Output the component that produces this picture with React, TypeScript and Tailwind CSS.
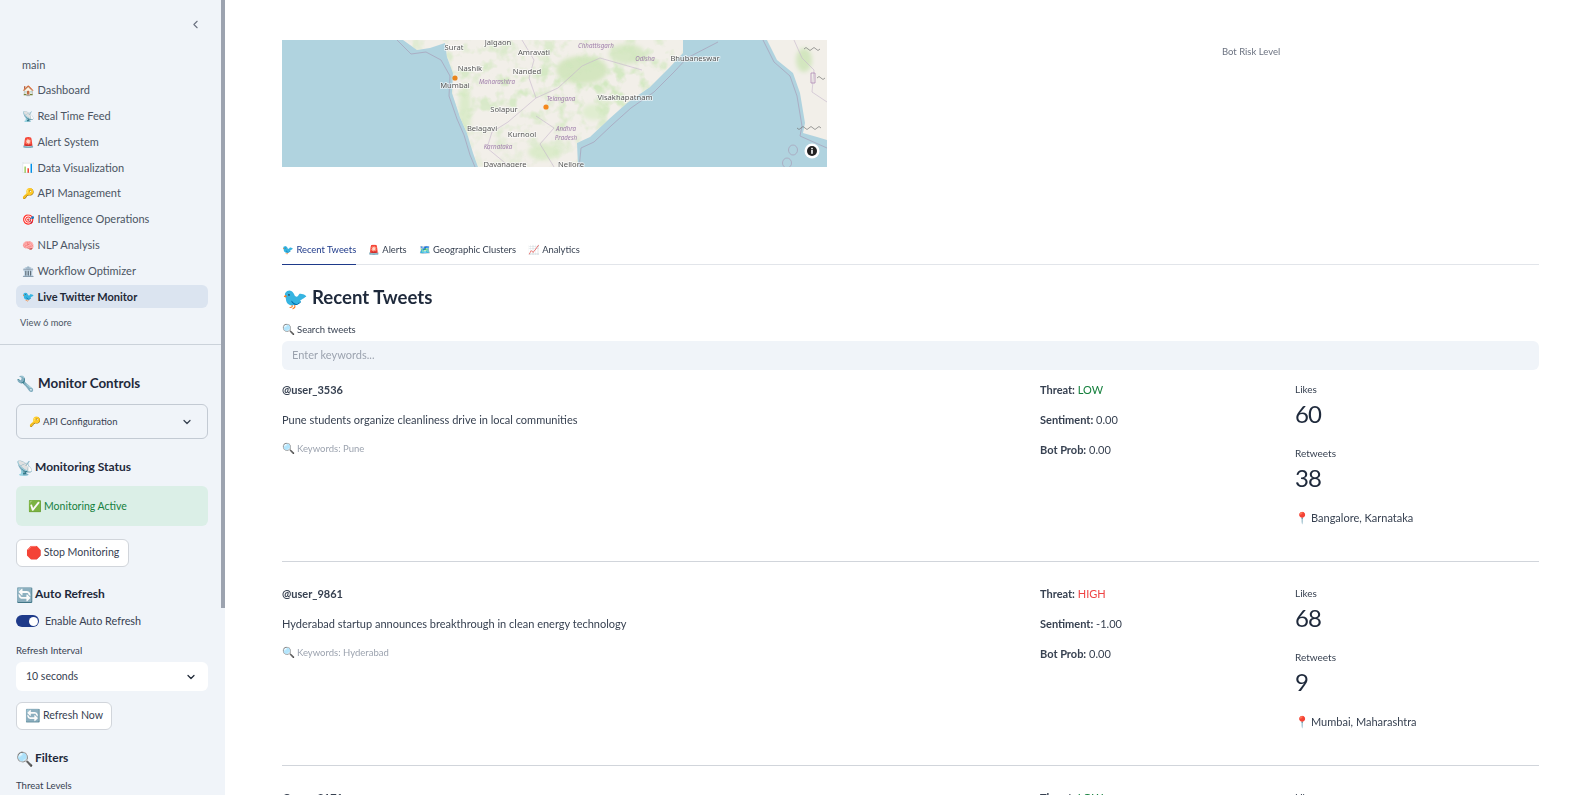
import React from "react";
import { ChevronLeft, ChevronDown } from "lucide-react";

const font = "font-['Lato','Noto_Sans',sans-serif]";

const nav = [
  ["🏠", "Dashboard"],
  ["📡", "Real Time Feed"],
  ["🚨", "Alert System"],
  ["📊", "Data Visualization"],
  ["🔑", "API Management"],
  ["🎯", "Intelligence Operations"],
  ["🧠", "NLP Analysis"],
  ["🏛️", "Workflow Optimizer"],
];

const labels: [number, number, string][] = [
  [172, 7, "Surat"],
  [216, 2, "Jalgaon"],
  [252, 12, "Amravati"],
  [188, 28, "Nashik"],
  [245, 31, "Nanded"],
  [173, 45, "Mumbai"],
  [222, 69, "Solapur"],
  [200, 88, "Belagavi"],
  [240, 94, "Kurnool"],
  [223, 124, "Davanagere"],
  [289, 124, "Nellore"],
  [343, 57, "Visakhapatnam"],
  [413, 18, "Bhubaneswar"],
];
const regions: [number, number, string][] = [
  [215, 42, "Maharashtra"],
  [279, 59, "Telangana"],
  [216, 107, "Karnataka"],
  [284, 89, "Andhra"],
  [284, 98, "Pradesh"],
  [363, 19, "Odisha"],
  [314, 6, "Chhattisgarh"],
];

const greens: [number, number, number, number, string][] = [
  [183, 70, 6, 28, "#dcebcb"],
  [300, 30, 26, 14, "#d4e6c0"],
  [345, 14, 18, 10, "#d8e8c6"],
  [262, 112, 16, 8, "#dcebcb"],
  [312, 72, 12, 8, "#e0edd0"],
];

function MapPic() {
  const land =
    "M121 0L135 10L148 8L163 3L165 17L171 33L170 53L178 77L185 93L191 113L196 127L296 127L295 103L308 97L326 80L345 63L368 47L388 27L401 13L401 0Z";
  return (
    <svg viewBox="0 0 545 127" className="block w-full h-full" preserveAspectRatio="none">
      <defs>
        <filter id="b" x="-30%" y="-30%" width="160%" height="160%">
          <feGaussianBlur stdDeviation="2" />
        </filter>
        <filter id="s" x="0" y="0" width="100%" height="100%">
          <feGaussianBlur stdDeviation="0.3" />
        </filter>
        <filter id="n" x="0" y="0" width="100%" height="100%">
          <feTurbulence type="fractalNoise" baseFrequency="0.07" numOctaves="3" seed="4" />
          <feColorMatrix values="0 0 0 0 0.62  0 0 0 0 0.8  0 0 0 0 0.5  4 0 0 0 -1.9" />
        </filter>
        <clipPath id="land">
          <path d={land} />
        </clipPath>
        <radialGradient id="g" cx="0.55" cy="0.35" r="0.6">
          <stop offset="0" stopColor="#fff" stopOpacity="0.95" />
          <stop offset="1" stopColor="#fff" stopOpacity="0.3" />
        </radialGradient>
        <mask id="m">
          <rect width="545" height="127" fill="url(#g)" />
        </mask>
      </defs>
      <rect width="545" height="127" fill="#b0d3df" />
      <path d={land} fill="#f2efe9" />
      <path d="M485 0L495 20L511 33L518 53L523 83L521 93L535 97L545 100L545 0Z" fill="#f2efe9" />
      <g clipPath="url(#land)">
        <g filter="url(#b)">
          {greens.map(([cx, cy, rx, ry, c], i) => (
            <ellipse key={i} cx={cx} cy={cy} rx={rx} ry={ry} fill={c} />
          ))}
        </g>
        <g mask="url(#m)">
          <rect x="120" width="285" height="127" filter="url(#n)" />
        </g>
      </g>
      <ellipse cx="522" cy="20" rx="8" ry="12" fill="#d3e6bf" filter="url(#b)" />
      <g fill="none" stroke="#a8a5bd" strokeWidth="0.8" filter="url(#s)">
        <path d="M121 0L135 14L150 12L165 20L174 36L173 56L181 79L188 95L194 115L199 127" transform="translate(-6 0)" />
        <path d="M296 127L298 106L311 100L329 83L348 66L371 50L391 30L404 16L435 0" transform="translate(1 2)" />
        <path d="M481 0L492 22L508 36L515 56L520 86L518 96L545 108" />
        <ellipse cx="511" cy="110" rx="4.5" ry="5" />
        <ellipse cx="505" cy="123" rx="4.5" ry="5" />
      </g>
      <g fill="none" stroke="#c6b6cc" strokeWidth="0.6">
        <path d="M240 0L252 20L247 38L254 58L226 82L210 92L205 108L228 127" />
        <path d="M254 58L276 48L300 26L318 18L360 30" />
        <path d="M254 76L272 88L258 104L272 127" />
        <path d="M512 0L520 18L532 30L530 52L545 62" />
      </g>
      <g className="font-['Noto_Sans',sans-serif]" textAnchor="middle" fontSize="7.6" fill="#555555" stroke="#ffffff" strokeOpacity="0.7" strokeWidth="1.6" paintOrder="stroke" filter="url(#s)">
        {labels.map(([x, y, t]) => (
          <text key={t} x={x} y={y + 3}>{t}</text>
        ))}
      </g>
      <g className="font-['Noto_Sans',sans-serif]" textAnchor="middle" fontSize="6.2" fontStyle="italic" fill="#a07fac" filter="url(#s)">
        {regions.map(([x, y, t]) => (
          <text key={t} x={x} y={y + 2}>{t}</text>
        ))}
      </g>
      <g fill="none" stroke="#777" strokeWidth="0.7" filter="url(#s)">
        <path d="M522 9q2-3 4 0t4 0t4 0t4 0" />
        <path d="M529 33h4v10h-4z" stroke="#a67cb0" />
        <path d="M535 38q2-3 4 0t4 0" />
        <path d="M515 88q2 3 4 0t4 0t4 0t4 0t4 0t4 0" />
      </g>
      <circle cx="173" cy="38" r="2.6" fill="#e8851c" />
      <circle cx="264" cy="67" r="2.6" fill="#f4881c" />
      <circle cx="530" cy="111" r="7.5" fill="#fff" />
      <circle cx="530" cy="111" r="5" fill="#222" />
      <rect x="529.2" y="110" width="1.6" height="3.8" fill="#fff" />
      <rect x="529.2" y="107.8" width="1.6" height="1.5" fill="#fff" />
    </svg>
  );
}

function Tweet({ user, text, kw, threat, tc, sent, bot, likes, rts, loc }: any) {
  return (
    <div className="mb-[20px] grid grid-cols-[758px_255px_1fr] h-[184px] border-b border-[#d1d5db] text-[11px] text-[#374151]">
      <div className="pt-[4px]">
        <div className="h-[30px] font-bold leading-[16px]">{user}</div>
        <div className="h-[30px] leading-[16px]">{text}</div>
        {kw && (
          <div className="flex text-[9.5px] leading-[13px] text-[#9ca3af]">
            <span className="w-[15px] text-[10.5px]">🔍</span>
            <span>Keywords: {kw}</span>
          </div>
        )}
      </div>
      <div className="pt-[4px] leading-[16px]">
        <div className="h-[30px]"><b>Threat:</b> <span style={{ color: tc }}>{threat}</span></div>
        <div className="h-[30px]"><b>Sentiment:</b> {sent}</div>
        <div><b>Bot Prob:</b> {bot}</div>
      </div>
      <div className="pt-[4px]">
        <div className="text-[10px] leading-[14px] h-[14px]">Likes</div>
        <div className="h-[50px] text-[24px] tracking-[-1px] leading-[36px] text-[#1e293b]">{likes}</div>
        <div className="text-[10px] leading-[14px] h-[14px]">Retweets</div>
        <div className="h-[50px] text-[24px] tracking-[-1px] leading-[36px] text-[#1e293b]">{rts}</div>
        {loc && (
          <div className="flex leading-[16px]">
            <span className="w-[16px] text-[11.5px]">📍</span>
            <span>{loc}</span>
          </div>
        )}
      </div>
    </div>
  );
}

function Btn({ children, w }: any) {
  return (
    <div className={`h-[28px] ${w} flex items-center justify-center gap-[2px] bg-white border border-[#d1d5db] rounded-[6px] text-[10.6px] text-[#374151]`}>
      {children}
    </div>
  );
}

function Head({ e, size, children, cls, mr }: any) {
  return (
    <div className={`h-[20px] flex items-center font-bold text-[#1e293b] ${cls}`}>
      <span className={`${size} ${mr}`}>{e}</span>
      <span>{children}</span>
    </div>
  );
}

export default function App() {
  return (
    <div className={`${font} h-screen flex overflow-hidden bg-white`}>
      <aside className="relative w-[225px] shrink-0 h-full overflow-hidden bg-[#f0f4f9]">
        <div className="absolute right-0 top-0 w-[4px] h-[608px] bg-[#9ca3af]" />
        <div className="h-[54px] flex items-start justify-end pr-[23px] pt-[18px]">
          <ChevronLeft size={13} className="text-[#6b7280]" />
        </div>
        <div className="pl-[16px] pr-[17px]">
          <div className="h-[22px] pl-[6px] flex items-center text-[11px] text-[#4b5563]">main</div>
          <div className="mt-[3px] flex flex-col gap-[2.8px]">
            {nav.map(([e, t]) => (
              <div key={t} className="h-[23px] pl-[6px] flex items-center text-[11px] text-[#4b5563] whitespace-pre">
                <span className="w-[15.5px] text-[10px]">{e}</span><span>{t}</span>
              </div>
            ))}
            <div className="h-[23px] pl-[6px] flex items-center text-[11px] font-bold text-[#1f2937] rounded-[6px] bg-[#dbe4f0]">
              <span className="w-[15.5px] text-[10px]">🐦</span><span>Live Twitter Monitor</span>
            </div>
          </div>
          <div className="mt-[5px] h-[20px] pl-[4px] flex items-center text-[9.3px] text-[#4b5563]">View 6 more</div>
        </div>
        <div className="mt-[11px] h-px bg-[#cbd2da]" />
        <div className="pl-[16px] pr-[17px]">
          <div className="mt-[28px]"><Head e="🔧" size="text-[15px]" mr="mr-[3px]" cls="text-[13.4px]">Monitor Controls</Head></div>
          <div className="mt-[11px] h-[35px] px-[12px] flex items-center justify-between border border-[#c3cad3] rounded-[6px] text-[9.5px] text-[#374151]">
            <span>🔑 API Configuration</span>
            <ChevronDown size={12} strokeWidth={2.5} className="text-[#374151] mr-[2px]" />
          </div>
          <div className="mt-[18px]"><Head e="📡" size="text-[14px]" mr="mr-[2px]" cls="text-[12px]">Monitoring Status</Head></div>
          <div className="mt-[9px] h-[40px] px-[12px] flex items-center rounded-[6px] bg-[#dbefe7] text-[10.5px] text-[#15803d]">
            <span className="w-[16px] text-[11px]">✅</span>Monitoring Active
          </div>
          <div className="mt-[13px]"><Btn w="w-[113px]"><span className="text-[12.5px]">🛑</span>Stop Monitoring</Btn></div>
          <div className="mt-[17px]"><Head e="🔄" size="text-[14px]" mr="mr-[2px]" cls="text-[12px]">Auto Refresh</Head></div>
          <div className="mt-[9px] h-[16px] flex items-center gap-[6px] text-[10.8px] text-[#374151]">
            <div className="w-[23px] h-[12px] rounded-full bg-[#1e3a8a] flex items-center justify-end pr-[1px]">
              <div className="w-[9px] h-[9px] rounded-full bg-white" />
            </div>
            <span>Enable Auto Refresh</span>
          </div>
          <div className="mt-[15px] h-[14px] flex items-center text-[9.6px] text-[#374151]">Refresh Interval</div>
          <div className="mt-[4px] h-[29px] pl-[10px] pr-[11px] flex items-center justify-between rounded-[6px] bg-white text-[10.5px] text-[#374151]">
            <span>10 seconds</span>
            <ChevronDown size={12} strokeWidth={2.5} className="text-[#1f2937]" />
          </div>
          <div className="mt-[11px]"><Btn w="w-[96px]"><span className="text-[12.5px]">🔄</span>Refresh Now</Btn></div>
          <div className="mt-[18px]"><Head e="🔍" size="text-[14px]" mr="mr-[2px]" cls="text-[12px]">Filters</Head></div>
          <div className="mt-[11px] h-[14px] flex items-center text-[9.6px] text-[#374151]">Threat Levels</div>
        </div>
      </aside>

      <main className="flex-1 min-w-0 h-full overflow-hidden pl-[57px] pr-[52px] pt-[40px]">
        <div className="flex h-[127px]">
          <div className="w-[545px] h-[127px] shrink-0"><MapPic /></div>
          <div className="flex-1 pl-[395px] pt-[5px]">
            <span className="block text-[9.5px] leading-[14px] text-[#6b7280]">Bot Risk Level</span>
          </div>
        </div>
        <div className="mt-[71px] h-[27px] flex gap-[12px] border-b border-[#e2e5ea] text-[9.4px] text-[#374151]">
          <div className="h-[27px] pt-[5px] border-b border-[#1e3a8a] text-[#1e3a8a]">🐦 Recent Tweets</div>
          <div className="pt-[5px]">🚨 Alerts</div>
          <div className="pt-[5px]">🗺️ Geographic Clusters</div>
          <div className="pt-[5px]">📈 Analytics</div>
        </div>
        <div className="mt-[20px] h-[26px] flex items-center font-bold text-[18.6px] text-[#1e293b]">
          <span className="text-[21px] mr-[4px]">🐦</span>Recent Tweets
        </div>
        <div className="mt-[12px] h-[14px] flex items-center text-[9.5px] text-[#374151]">
          <span className="w-[15px] text-[10.5px]">🔍</span>Search tweets
        </div>
        <div className="mt-[4px] h-[29px] px-[10px] flex items-center rounded-[6px] bg-[#f0f4f9] text-[11px] text-[#9ca3af]">Enter keywords...</div>
        <div className="mt-[8px]">
          <Tweet user="@user_3536" text="Pune students organize cleanliness drive in local communities" kw="Pune" threat="LOW" tc="#15803d" sent="0.00" bot="0.00" likes="60" rts="38" loc="Bangalore, Karnataka" />
          <Tweet user="@user_9861" text="Hyderabad startup announces breakthrough in clean energy technology" kw="Hyderabad" threat="HIGH" tc="#ef4444" sent="-1.00" bot="0.00" likes="68" rts="9" loc="Mumbai, Maharashtra" />
          <Tweet user="@user_8171" text="" kw="" threat="LOW" tc="#15803d" sent="0.00" bot="0.00" likes="" rts="" loc="" />
        </div>
      </main>
    </div>
  );
}
